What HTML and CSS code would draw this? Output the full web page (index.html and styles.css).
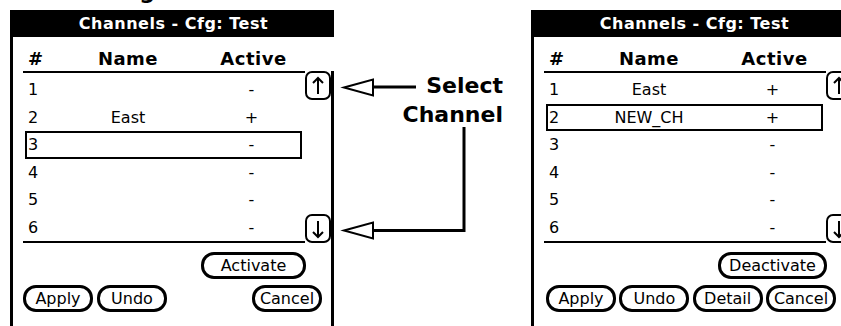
FILE: index.html
```html
<!DOCTYPE html>
<html lang="en">
  <head>
    <meta charset="UTF-8" />
    <meta name="viewport" content="width=device-width, initial-scale=1.0" />
    <title>Channels - Cfg: Test</title>
    <link rel="stylesheet" href="styles.css">
  </head>
  <body>
    <div class="caption"><span>Setting</span></div>
    <div class="figure">
      <!-- before: row 3 picked -->
      <div class="panel">
        <div class="title">Channels - Cfg: Test</div>
        <div class="row head">
          <span>#</span><span class="name">Name</span><span class="active">Active</span>
        </div>
        <div class="body">
          <div class="list-wrap">
            <div class="list">
              <div class="row"><span>1</span><span class="name"></span><span class="active">-</span></div>
              <div class="row"><span>2</span><span class="name">East</span><span class="active">+</span></div>
              <div class="row selected"><span>3</span><span class="name"></span><span class="active">-</span></div>
              <div class="row"><span>4</span><span class="name"></span><span class="active">-</span></div>
              <div class="row"><span>5</span><span class="name"></span><span class="active">-</span></div>
              <div class="row"><span>6</span><span class="name"></span><span class="active">-</span></div>
            </div>
            <div class="scroller">
              <div class="scroll-btn">
                <svg width="14" height="20" viewBox="0 0 14 20"><path d="M7 2V18M2 7L7 2L12 7" fill="none" stroke="#000" stroke-width="2"/></svg>
              </div>
              <div class="scroll-btn">
                <svg width="14" height="20" viewBox="0 0 14 20"><path d="M7 2V18M2 13L7 18L12 13" fill="none" stroke="#000" stroke-width="2"/></svg>
              </div>
            </div>
          </div>
          <div class="actions">
            <div class="btn btn-wide">Activate</div>
          </div>
          <div class="buttons">
            <div class="btn">Apply</div>
            <div class="btn">Undo</div>
            <div class="btn push">Cancel</div>
          </div>
        </div>
      </div>

      <div class="note">
        <div class="note-text">Select<br />Channel</div>
        <svg class="note-arrows" width="198" height="316" viewBox="0 0 198 316">
          <polygon points="10,77.5 39,69.5 39,85.5" fill="#fff" stroke="#000" stroke-width="2"/>
          <line x1="39" y1="77" x2="82" y2="77" stroke="#000" stroke-width="3"/>
          <polyline points="130,117 130,220.5 39,220.5" fill="none" stroke="#000" stroke-width="3"/>
          <polygon points="10,220.5 39,212.5 39,228.5" fill="#fff" stroke="#000" stroke-width="2"/>
        </svg>
      </div>

      <!-- after: row 2 renamed and active -->
      <div class="panel">
        <div class="title">Channels - Cfg: Test</div>
        <div class="row head">
          <span>#</span><span class="name">Name</span><span class="active">Active</span>
        </div>
        <div class="body">
          <div class="list-wrap">
            <div class="list">
              <div class="row"><span>1</span><span class="name">East</span><span class="active">+</span></div>
              <div class="row selected"><span>2</span><span class="name">NEW_CH</span><span class="active">+</span></div>
              <div class="row"><span>3</span><span class="name"></span><span class="active">-</span></div>
              <div class="row"><span>4</span><span class="name"></span><span class="active">-</span></div>
              <div class="row"><span>5</span><span class="name"></span><span class="active">-</span></div>
              <div class="row"><span>6</span><span class="name"></span><span class="active">-</span></div>
            </div>
            <div class="scroller">
              <div class="scroll-btn">
                <svg width="14" height="20" viewBox="0 0 14 20"><path d="M7 2V18M2 7L7 2L12 7" fill="none" stroke="#000" stroke-width="2"/></svg>
              </div>
              <div class="scroll-btn">
                <svg width="14" height="20" viewBox="0 0 14 20"><path d="M7 2V18M2 13L7 18L12 13" fill="none" stroke="#000" stroke-width="2"/></svg>
              </div>
            </div>
          </div>
          <div class="actions">
            <div class="btn btn-wider">Deactivate</div>
          </div>
          <div class="buttons four">
            <div class="btn">Apply</div>
            <div class="btn">Undo</div>
            <div class="btn">Detail</div>
            <div class="btn">Cancel</div>
          </div>
        </div>
      </div>
    </div>
  </body>
</html>
```

FILE: styles.css
```css
* {
  margin: 0;
  padding: 0;
  box-sizing: border-box;
}
body {
  width: 841px;
  height: 326px;
  overflow: hidden;
  background: #fff;
  color: #000;
  font-family: "DejaVu Sans", sans-serif;
  font-size: 16px;
}
/* only the tail of the caption above the figure shows */
.caption {
  display: flex;
  justify-content: flex-end;
  width: 155px;
  height: 10px;
  overflow: hidden;
}
.caption span {
  flex: none;
  margin-top: -19px;
  font-size: 22px;
  line-height: 22px;
  font-weight: bold;
  white-space: nowrap;
}
.figure {
  display: flex;
  height: 316px;
  padding-left: 10px;
}
.panel {
  flex: none;
  width: 324px;
  display: flex;
  flex-direction: column;
  border-left: 3px solid #000;
}
.title {
  height: 27px;
  line-height: 27px;
  background: #000;
  color: #fff;
  text-align: center;
  font-weight: bold;
  letter-spacing: 0.5px;
}
.row {
  display: grid;
  grid-template-columns: 38px 124px 1fr;
  align-items: center;
  height: 27.5px;
  margin: 0 3px 0 2px;
  padding-left: 1px;
  border: 2px solid transparent;
}
.row .name,
.row .active {
  text-align: center;
}
.row .active {
  padding-left: 13px;
}
.row.selected {
  border-color: #000;
}
.head {
  margin-left: 12px;
  width: 279px;
  height: 34px;
  padding-top: 10px;
  padding-left: 3px;
  line-height: 24px;
  font-size: 18px;
  font-weight: bold;
  letter-spacing: 0.5px;
  border: none;
}
.body {
  flex: 1;
  border-right: 3px solid #000;
}
.list-wrap {
  display: flex;
  margin-left: 10px;
}
.list {
  width: 282px;
  border-top: 2px solid #000;
  border-bottom: 2px solid #000;
  padding-top: 3px;
}
.scroller {
  width: 26px;
  display: flex;
  flex-direction: column;
  justify-content: space-between;
}
.scroll-btn {
  height: 29px;
  border: 2px solid #000;
  border-radius: 7px;
  display: flex;
  align-items: center;
  justify-content: center;
}
.actions {
  display: flex;
  justify-content: flex-end;
  width: 283px;
  margin: 9px 0 0 10px;
}
.btn {
  width: 70px;
  height: 27px;
  border: 3px solid #000;
  border-radius: 13px;
  display: flex;
  align-items: center;
  justify-content: center;
  white-space: nowrap;
}
.btn-wide {
  width: 105px;
}
.btn-wider {
  width: 109px;
}
.buttons {
  display: flex;
  gap: 4px;
  width: 299px;
  margin: 6px 0 0 10px;
}
.buttons .push {
  margin-left: auto;
}
.buttons.four {
  justify-content: space-between;
  gap: 0;
  width: 292px;
  padding-left: 2px;
}
.note {
  flex: none;
  width: 197px;
  position: relative;
}
.note-text {
  padding: 61px 28px 0 0;
  text-align: right;
  font-size: 22px;
  line-height: 29px;
  font-weight: bold;
}
.note-arrows {
  position: absolute;
  left: 0;
  top: 0;
}
```
